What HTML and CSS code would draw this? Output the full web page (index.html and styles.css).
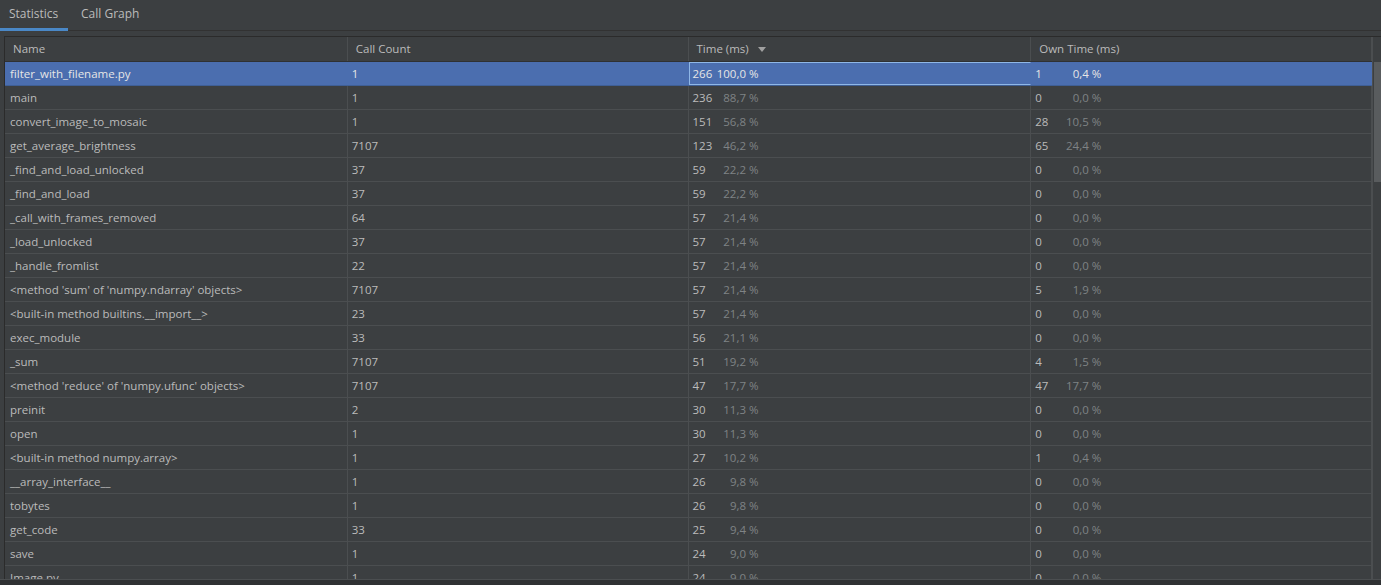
FILE: index.html
```html
<!DOCTYPE html>
<html>
<head>
<meta charset="utf-8">
<link rel="stylesheet" href="styles.css">
</head>
<body>
<div class="app">
  <div class="tabs">
    <div class="tab active">Statistics</div>
    <div class="tab second">Call Graph</div>
  </div>
  <div class="table-wrap">
    <div class="table">
      <div class="row head">
        <div class="cell c-name">Name</div>
        <div class="cell c-count">Call Count</div>
        <div class="cell c-time">Time (ms) <span class="sort"></span></div>
        <div class="cell c-own">Own Time (ms)</div>
      </div>
      <div class="body">
        <div class="row sel">
          <div class="cell c-name">filter_with_filename.py</div>
          <div class="cell c-count">1</div>
          <div class="cell c-time focus"><span class="num"><b>266</b><i>100,0 %</i></span></div>
          <div class="cell c-own"><span class="num"><b>1</b><i>0,4 %</i></span></div>
        </div>
        <div class="row"><div class="cell c-name">main</div><div class="cell c-count">1</div><div class="cell c-time"><span class="num"><b>236</b><i>88,7 %</i></span></div><div class="cell c-own"><span class="num"><b>0</b><i>0,0 %</i></span></div></div>
        <div class="row"><div class="cell c-name">convert_image_to_mosaic</div><div class="cell c-count">1</div><div class="cell c-time"><span class="num"><b>151</b><i>56,8 %</i></span></div><div class="cell c-own"><span class="num"><b>28</b><i>10,5 %</i></span></div></div>
        <div class="row"><div class="cell c-name">get_average_brightness</div><div class="cell c-count">7107</div><div class="cell c-time"><span class="num"><b>123</b><i>46,2 %</i></span></div><div class="cell c-own"><span class="num"><b>65</b><i>24,4 %</i></span></div></div>
        <div class="row"><div class="cell c-name">_find_and_load_unlocked</div><div class="cell c-count">37</div><div class="cell c-time"><span class="num"><b>59</b><i>22,2 %</i></span></div><div class="cell c-own"><span class="num"><b>0</b><i>0,0 %</i></span></div></div>
        <div class="row"><div class="cell c-name">_find_and_load</div><div class="cell c-count">37</div><div class="cell c-time"><span class="num"><b>59</b><i>22,2 %</i></span></div><div class="cell c-own"><span class="num"><b>0</b><i>0,0 %</i></span></div></div>
        <div class="row"><div class="cell c-name">_call_with_frames_removed</div><div class="cell c-count">64</div><div class="cell c-time"><span class="num"><b>57</b><i>21,4 %</i></span></div><div class="cell c-own"><span class="num"><b>0</b><i>0,0 %</i></span></div></div>
        <div class="row"><div class="cell c-name">_load_unlocked</div><div class="cell c-count">37</div><div class="cell c-time"><span class="num"><b>57</b><i>21,4 %</i></span></div><div class="cell c-own"><span class="num"><b>0</b><i>0,0 %</i></span></div></div>
        <div class="row"><div class="cell c-name">_handle_fromlist</div><div class="cell c-count">22</div><div class="cell c-time"><span class="num"><b>57</b><i>21,4 %</i></span></div><div class="cell c-own"><span class="num"><b>0</b><i>0,0 %</i></span></div></div>
        <div class="row"><div class="cell c-name">&lt;method 'sum' of 'numpy.ndarray' objects&gt;</div><div class="cell c-count">7107</div><div class="cell c-time"><span class="num"><b>57</b><i>21,4 %</i></span></div><div class="cell c-own"><span class="num"><b>5</b><i>1,9 %</i></span></div></div>
        <div class="row"><div class="cell c-name">&lt;built-in method builtins.__import__&gt;</div><div class="cell c-count">23</div><div class="cell c-time"><span class="num"><b>57</b><i>21,4 %</i></span></div><div class="cell c-own"><span class="num"><b>0</b><i>0,0 %</i></span></div></div>
        <div class="row"><div class="cell c-name">exec_module</div><div class="cell c-count">33</div><div class="cell c-time"><span class="num"><b>56</b><i>21,1 %</i></span></div><div class="cell c-own"><span class="num"><b>0</b><i>0,0 %</i></span></div></div>
        <div class="row"><div class="cell c-name">_sum</div><div class="cell c-count">7107</div><div class="cell c-time"><span class="num"><b>51</b><i>19,2 %</i></span></div><div class="cell c-own"><span class="num"><b>4</b><i>1,5 %</i></span></div></div>
        <div class="row"><div class="cell c-name">&lt;method 'reduce' of 'numpy.ufunc' objects&gt;</div><div class="cell c-count">7107</div><div class="cell c-time"><span class="num"><b>47</b><i>17,7 %</i></span></div><div class="cell c-own"><span class="num"><b>47</b><i>17,7 %</i></span></div></div>
        <div class="row"><div class="cell c-name">preinit</div><div class="cell c-count">2</div><div class="cell c-time"><span class="num"><b>30</b><i>11,3 %</i></span></div><div class="cell c-own"><span class="num"><b>0</b><i>0,0 %</i></span></div></div>
        <div class="row"><div class="cell c-name">open</div><div class="cell c-count">1</div><div class="cell c-time"><span class="num"><b>30</b><i>11,3 %</i></span></div><div class="cell c-own"><span class="num"><b>0</b><i>0,0 %</i></span></div></div>
        <div class="row"><div class="cell c-name">&lt;built-in method numpy.array&gt;</div><div class="cell c-count">1</div><div class="cell c-time"><span class="num"><b>27</b><i>10,2 %</i></span></div><div class="cell c-own"><span class="num"><b>1</b><i>0,4 %</i></span></div></div>
        <div class="row"><div class="cell c-name">__array_interface__</div><div class="cell c-count">1</div><div class="cell c-time"><span class="num"><b>26</b><i>9,8 %</i></span></div><div class="cell c-own"><span class="num"><b>0</b><i>0,0 %</i></span></div></div>
        <div class="row"><div class="cell c-name">tobytes</div><div class="cell c-count">1</div><div class="cell c-time"><span class="num"><b>26</b><i>9,8 %</i></span></div><div class="cell c-own"><span class="num"><b>0</b><i>0,0 %</i></span></div></div>
        <div class="row"><div class="cell c-name">get_code</div><div class="cell c-count">33</div><div class="cell c-time"><span class="num"><b>25</b><i>9,4 %</i></span></div><div class="cell c-own"><span class="num"><b>0</b><i>0,0 %</i></span></div></div>
        <div class="row"><div class="cell c-name">save</div><div class="cell c-count">1</div><div class="cell c-time"><span class="num"><b>24</b><i>9,0 %</i></span></div><div class="cell c-own"><span class="num"><b>0</b><i>0,0 %</i></span></div></div>
        <div class="row"><div class="cell c-name">Image.py</div><div class="cell c-count">1</div><div class="cell c-time"><span class="num"><b>24</b><i>9,0 %</i></span></div><div class="cell c-own"><span class="num"><b>0</b><i>0,0 %</i></span></div></div>
      </div>
    </div>
    <div class="scrollbar"><div class="thumb"></div></div>
  </div>
  <div class="bottom"></div>
</div>
</body>
</html>
```

FILE: styles.css
```css
html, body {
  margin: 0;
  padding: 0;
  background: #3c3f41;
  height: 100%;
  overflow: hidden;
}
.app {
  width: 1381px;
  height: 585px;
  display: flex;
  flex-direction: column;
  font-family: "Open Sans", "Noto Sans", sans-serif;
  font-size: 11.5px;
  color: #bbbbbb;
  background: #3c3f41;
}
.tabs {
  height: 31px;
  display: flex;
  border-bottom: 1px solid #323232;
  box-sizing: border-box;
  flex: none;
}
.tab {
  padding: 0 13px 0 9px;
  line-height: 28px;
  height: 31px;
  box-sizing: border-box;
  color: #bbbbbb;
  font-size: 12px;
}
.tab.second {
  padding-left: 13px;
}
.tab.active {
  border-bottom: 3px solid #4a88c7;
  width: 68px;
}
.table-wrap {
  margin-top: 5px;
  margin-left: 4px;
  height: 542px;
  display: flex;
  border-top: 1px solid #2b2b2b;
  border-left: 1px solid #2b2b2b;
  overflow: hidden;
  flex: none;
}
.table {
  flex: 1;
  overflow: hidden;
}
.row {
  display: flex;
  height: 24px;
  box-sizing: border-box;
  border-bottom: 1px solid #4b4e50;
}
.cell {
  box-sizing: border-box;
  border-right: 1px solid #4b4e50;
  padding-left: 4px;
  line-height: 23px;
  white-space: nowrap;
  overflow: hidden;
}
.c-name { width: 343px; }
.c-count { width: 341px; }
.c-time { width: 343px; }
.c-own { width: 341px; }
.head {
  height: 25px;
  border-bottom: 1px solid #2f3133;
}
.head .cell {
  padding-left: 8px;
  line-height: 24px;
}
.head .c-name { padding-left: 8px; }
.sort {
  display: inline-block;
  width: 0;
  height: 0;
  border-left: 4px solid transparent;
  border-right: 4px solid transparent;
  border-top: 5px solid #a0a0a0;
  margin-left: 6px;
  vertical-align: 1px;
}
.body .c-name { padding-left: 5px; }
.num {
  display: inline-flex;
  width: 66px;
  gap: 4px;
  justify-content: space-between;
}
.num b { font-weight: normal; color: #bbbbbb; }
.num i { font-style: normal; color: #7f8385; }
.sel {
  background: #4b6eaf;
  border-bottom-color: #3f5f95;
}
.sel .cell { color: #e6e6e6; border-right-color: #4b6eaf; }
.sel .num b, .sel .num i { color: #e6e6e6; }
.focus {
  border: 1px solid #8fb7e6;
  line-height: 21px;
  padding-left: 3px;
}
.scrollbar {
  width: 8px;
  flex: none;
  padding-top: 25px;
  background: #3c3f41;
  border-left: 1px solid #4b4e50;
}
.thumb {
  height: 120px;
  background: #595c5e;
  margin-left: 1px;
}
.bottom {
  flex: 1;
  border-top: 1px solid #4b4e50;
  background: #2f3133;
}
```
